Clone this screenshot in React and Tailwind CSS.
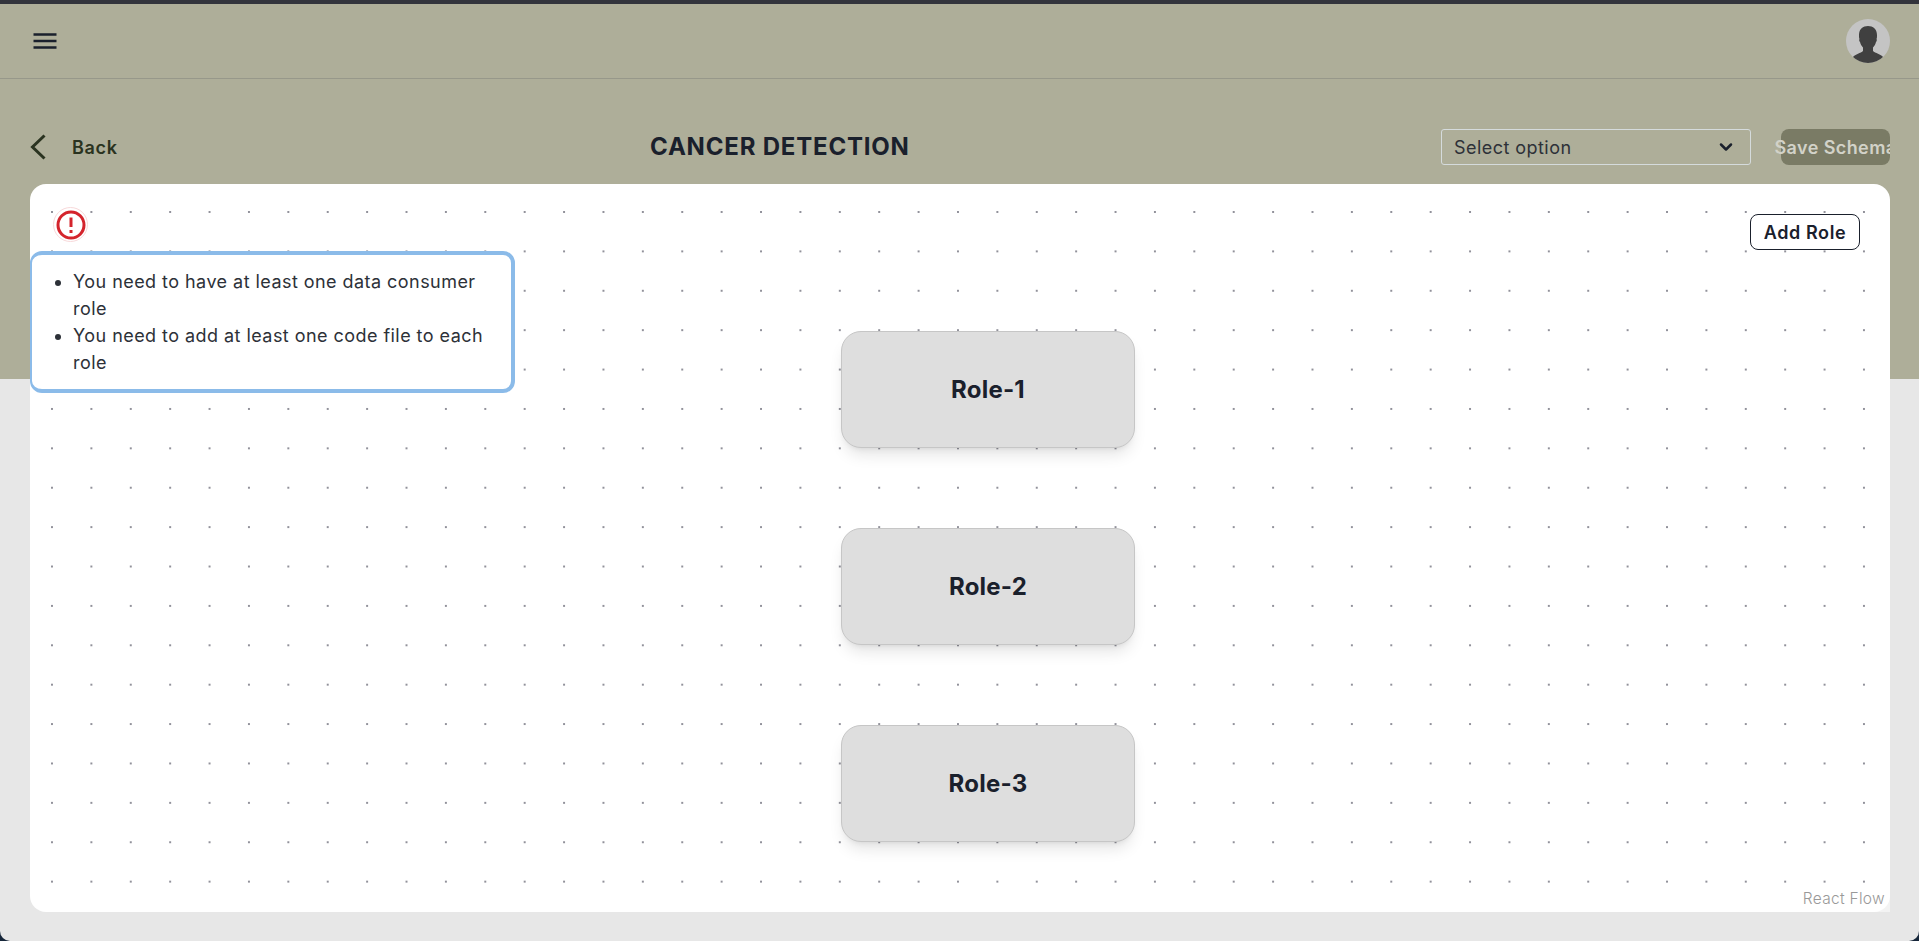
import { ChevronDown } from 'lucide-react';

const roles = [
  { name: 'Role-1', top: 'top-[147px]' },
  { name: 'Role-2', top: 'top-[344px]' },
  { name: 'Role-3', top: 'top-[541px]' },
];

const RoleNode = ({ name, top }) => (
  <div className={`absolute left-[811px] ${top} flex h-[117px] w-[294px] items-center justify-center rounded-[20px] border border-[#c6c6c6] bg-[#dedede] text-[24px] font-bold tracking-[0.2px] text-[#1a202c] shadow-[0_10px_15px_-3px_rgba(0,0,0,0.1),0_4px_6px_-4px_rgba(0,0,0,0.1)]`}>
    {name}
  </div>
);

const Avatar = () => (
  <svg viewBox="0 0 44 44" className="h-[44px] w-[44px]">
    <clipPath id="avatar-clip">
      <circle cx="22" cy="22" r="22" />
    </clipPath>
    <g clipPath="url(#avatar-clip)">
      <rect width="44" height="44" fill="#c4c4c4" />
      <path
        d="M22 7c-5 0-9 3-9 9 0 2 0 3 .5 4-.5.5-.5 2 .5 3 .5 2 1.500 4 3 5.500v3.500c-2 2-8 3.500-10 6-1 1-1 3-1 6h32c0-3 0-5-1-6-2-2.500-8-4-10-6v-3.500c1.500-1.500 2.500-3.500 3-5.500 1-1 1-2.500.5-3 .5-1 .5-2 .5-4 0-6-4-9-9-9z"
        fill="#404040"
      />
    </g>
  </svg>
);

const App = () => {
  return (
    <div className="h-[941px] w-full overflow-hidden bg-[#16263a] font-['Inter','Liberation_Sans',sans-serif]">
      <div className="flex h-full flex-col overflow-hidden rounded-b-[10px] bg-[#e7e7e7]">
        <div className="h-[4px] shrink-0 bg-[#33343c]" />

        {/* Olive band behind the top of the canvas */}
        <div className="h-[375px] shrink-0 bg-[#aeae99]">
          <div className="flex h-[75px] items-center justify-between border-b border-[#97988a] pl-[33px] pr-[29px]">
            <svg viewBox="0 0 24 16" className="h-[16px] w-[24px]" fill="none" stroke="#1a202c" strokeWidth="2.500">
              <path d="M0.500 1.500H23.500M0.500 8H23.500M0.500 14.500H23.500" />
            </svg>
            <Avatar />
          </div>

          <div className="mr-[29px] flex h-[104px] items-center overflow-hidden pl-[30px] pt-[32px]">
            <svg viewBox="0 0 16 26" className="h-[26px] w-[16px] shrink-0" fill="none" stroke="#2a3320" strokeWidth="3">
              <path d="M14.500 1.500L2.500 13L14.500 24.500" />
            </svg>
            <span className="ml-[26px] w-[46px] shrink-0 text-[18px] font-semibold tracking-[0.7px] text-[#2a3320]">Back</span>
            <h1 className="ml-[532px] w-[258px] shrink-0 whitespace-nowrap text-[24px] font-bold tracking-[0.8px] text-[#1a202c]">
              CANCER DETECTION
            </h1>
            <div className="ml-[533px] flex h-[36px] w-[310px] shrink-0 items-center justify-between rounded-[3px] border border-[#d5dbdc] pl-[12px] pr-[14px] text-[18px] tracking-[0.45px] text-[#2d3138]">
              <span>Select option</span>
              <ChevronDown size={20} strokeWidth={3} className="text-[#1a202c]" />
            </div>
            <button className="ml-[30px] flex h-[36px] w-[109px] shrink-0 items-center justify-center rounded-[8px] bg-[#7a7b65] text-[18px] font-semibold tracking-[0.4px] text-[#d2d2c8]">
              <span className="shrink-0 whitespace-nowrap">Save Schema</span>
            </button>
          </div>
        </div>

        {/* Flow canvas */}
        <div className="relative ml-[30px] mr-[29px] -mt-[195px] h-[728px] rounded-[16px] bg-white bg-[radial-gradient(circle,#91919a_1.1px,transparent_1.4px)] bg-[size:39.4px_39.4px] bg-[position:2.300px_8.300px]">
          <div className="absolute left-[23px] top-[23px] flex h-[35px] w-[35px] items-center justify-center rounded-full border border-[#f8d9da]">
            <svg viewBox="0 0 30 30" className="h-[30px] w-[30px]" fill="none" stroke="#d4242c" strokeWidth="3">
              <circle cx="15" cy="15" r="13" />
              <path d="M15 7.500V17" />
              <path d="M15 20V23" />
            </svg>
          </div>

          <div className="absolute left-0 top-[67px] h-[142px] w-[485px] rounded-[12px] border-4 border-l-2 border-[#8bbbe9] bg-white py-[13px] pl-[41px] pr-[20px] text-[18px] leading-[27px] tracking-[0.45px] text-[#2d3138]">
            <ul className="list-disc">
              <li>You need to have at least one data consumer role</li>
              <li>You need to add at least one code file to each role</li>
            </ul>
          </div>

          <button className="absolute right-[30px] top-[30px] flex h-[36px] w-[110px] items-center justify-center rounded-[8px] border border-[#1a202c] bg-white text-[18px] font-semibold tracking-[0.6px] text-[#1a202c]">
            Add Role
          </button>

          {roles.map((role) => (
            <RoleNode key={role.name} name={role.name} top={role.top} />
          ))}

          <div className="absolute bottom-0 right-0 bg-white/50 px-[5px] py-[2px] text-[15.500px] font-light leading-[22px] tracking-[0.3px] text-[#999999]">
            React Flow
          </div>
        </div>
      </div>
    </div>
  );
};

export default App;
